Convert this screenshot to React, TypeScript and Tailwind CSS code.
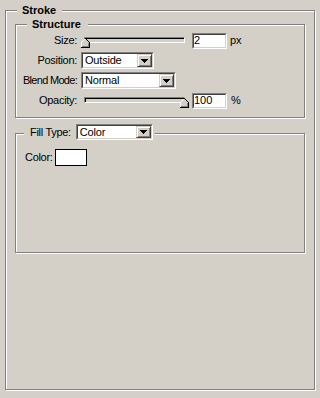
import React from "react";

const font = { fontFamily: '"Liberation Sans", Arial, sans-serif' };

function Sunken({ className = "", children }: { className?: string; children?: React.ReactNode }) {
  return (
    <div className={"border border-t-[#808080] border-l-[#808080] border-b-white border-r-white " + className}>
      <div className="h-full w-full border border-t-[#404040] border-l-[#404040] border-b-[#d4d0c8] border-r-[#d4d0c8] bg-white flex items-center">
        {children}
      </div>
    </div>
  );
}

function Select({ value, className = "" }: { value: string; className?: string }) {
  return (
    <Sunken className={className}>
      <span className="flex-1 pl-[2px] leading-none tracking-[-0.2px]">{value}</span>
      <div className="h-full w-[15px] bg-[#d4d0c8] border border-t-[#d4d0c8] border-l-[#d4d0c8] border-b-[#404040] border-r-[#404040] shadow-[inset_1px_1px_0_#fff,inset_-1px_-1px_0_#808080] flex items-center justify-center">
        <svg width="7" height="4" viewBox="0 0 7 4" shapeRendering="crispEdges">
          <polygon points="0,0 7,0 3.5,4" fill="#000" />
        </svg>
      </div>
    </Sunken>
  );
}

function Thumb() {
  return (
    <svg width="9" height="10" viewBox="0 0 9 10" shapeRendering="crispEdges">
      <polygon points="0,4 4,0 9,5 9,10 0,10" fill="#d4d0c8" />
      <polyline points="0.5,9.5 0.5,4.5 4.5,0.5" fill="none" stroke="#fff" strokeWidth="1" />
      <polyline points="4.5,0.5 8.5,4.5 8.5,9.5 0,9.5" fill="none" stroke="#000" strokeWidth="1" />
      <polyline points="7.5,5 7.5,8.5 1,8.5" fill="none" stroke="#808080" strokeWidth="1" />
    </svg>
  );
}

function Slider({ thumbLeft }: { thumbLeft: number }) {
  return (
    <div className="relative w-[108px] h-full">
      <div className="ml-[3px] mt-[5px] w-[101px] h-[6px] border border-t-[#808080] border-l-[#808080] border-b-white border-r-white shadow-[inset_1px_1px_0_#000]" />
      <div className="absolute top-[6px]" style={{ left: thumbLeft }}>
        <Thumb />
      </div>
    </div>
  );
}

function Label({ children, tight = false }: { children: React.ReactNode; tight?: boolean }) {
  return (
    <div className={"w-[61px] text-right shrink-0 whitespace-nowrap " + (tight ? "tracking-[-0.7px]" : "tracking-[-0.3px]")}>
      {children}
    </div>
  );
}

const etched =
  "relative border border-[#808080] shadow-[1px_1px_0_#fff,inset_1px_1px_0_#fff]";

export default function App() {
  return (
    <div className="w-[320px] h-[398px] bg-[#d4d0c8] text-black text-[11px] overflow-hidden pt-[10px] pl-[5px]" style={font}>
      <div className={etched + " w-[310px] h-[380px] pt-[13px] pl-[9px]"}>
        <div className="absolute top-[-7px] left-[11px] bg-[#d4d0c8] pl-[5px] pr-[6px] font-bold leading-[13px]">
          Stroke
        </div>

        {/* Structure */}
        <div className={etched + " w-[290px] h-[94px] pt-[7px] pl-0"}>
          <div className="absolute top-[-7px] left-[11px] bg-[#d4d0c8] pl-[5px] pr-[7px] font-bold leading-[13px]">
            Structure
          </div>
          <div className="flex flex-col gap-[3px]">
            <div className="flex items-center h-[17px]">
              <Label>Size:</Label>
              <div className="ml-[4px] flex items-start h-full">
                <Slider thumbLeft={0} />
              </div>
              <Sunken className="ml-[3px] w-[35px] h-[16px]">
                <span className="leading-none">2</span>
              </Sunken>
              <span className="ml-[3px]">px</span>
            </div>
            <div className="flex items-center h-[17px]">
              <Label>Position:</Label>
              <Select value="Outside" className="ml-[4px] w-[73px] h-[17px]" />
            </div>
            <div className="flex items-center h-[17px]">
              <Label tight>Blend Mode:</Label>
              <Select value="Normal" className="ml-[4px] w-[95px] h-[17px]" />
            </div>
            <div className="flex items-center h-[17px]">
              <Label>Opacity:</Label>
              <div className="ml-[4px] flex items-start h-full">
                <Slider thumbLeft={99} />
              </div>
              <Sunken className="ml-[3px] w-[35px] h-[16px]">
                <span className="leading-none">100</span>
              </Sunken>
              <span className="ml-[4px]">%</span>
            </div>
          </div>
        </div>

        {/* Fill */}
        <div className={etched + " mt-[15px] w-[290px] h-[120px] pt-[15px] pl-[9px]"}>
          <div className="absolute top-[-10px] left-[8px] bg-[#d4d0c8] pl-[6px] pr-[2px] flex items-center gap-[5px]">
            <span className="tracking-[-0.3px]">Fill Type:</span>
            <Select value="Color" className="w-[77px] h-[16px]" />
          </div>
          <div className="flex items-center h-[17px]">
            <span className="tracking-[-0.3px]">Color:</span>
            <div className="ml-[2px] w-[32px] h-[17px] border border-black bg-white" />
          </div>
        </div>
      </div>
    </div>
  );
}
